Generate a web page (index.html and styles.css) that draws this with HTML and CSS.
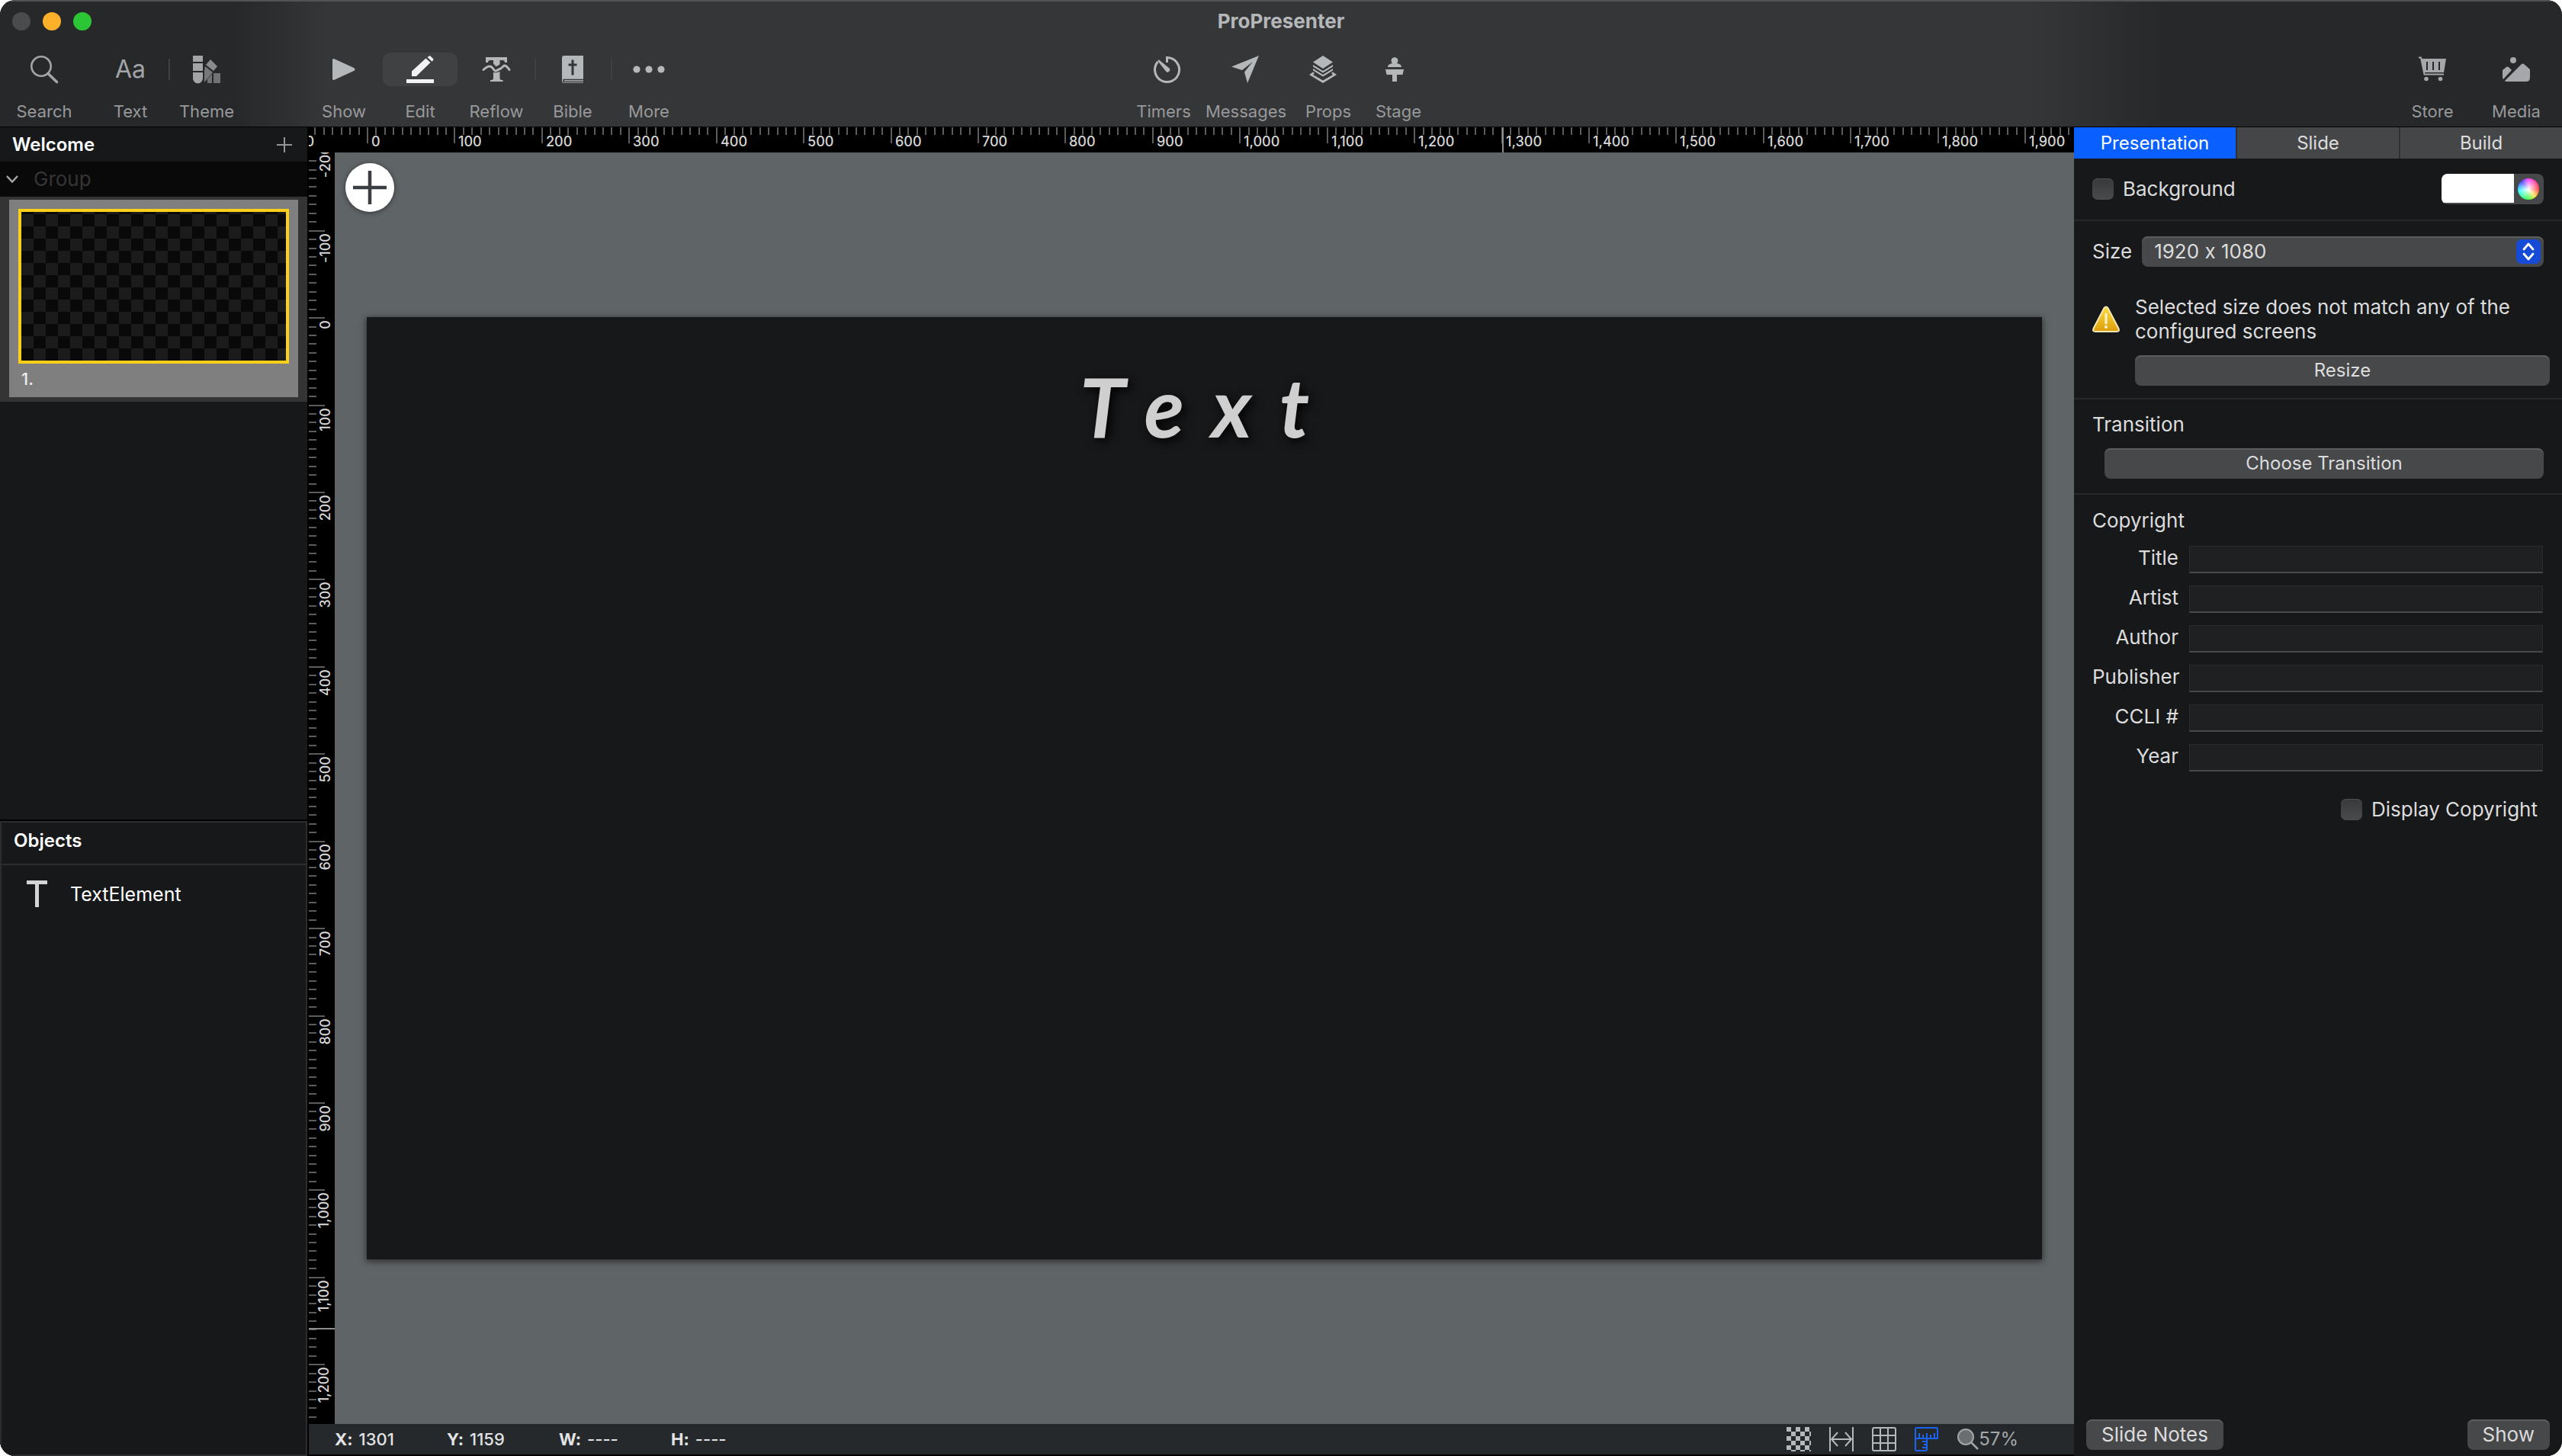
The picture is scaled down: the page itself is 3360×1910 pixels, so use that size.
FILE: index.html
```html
<!DOCTYPE html>
<html lang="en">
<head>
<meta charset="utf-8">
<title>ProPresenter</title>
<meta name="viewport" content="width=device-width, initial-scale=1">
<link rel="stylesheet" href="styles.css">
</head>
<body>
<div class="window">
  <header class="titlebar">
    <div class="title-row">
      <div class="lights">
        <button class="light" aria-label="Close"></button>
        <button class="light light-min" aria-label="Minimize"></button>
        <button class="light light-max" aria-label="Zoom"></button>
      </div>
      <h1 class="title">ProPresenter</h1>
    </div>
    <nav class="toolbar" aria-label="Toolbar">
      <div class="tools tools-left">
        <button class="tool tool-search">
          <span class="tool-icon"><svg width="36" height="36" viewBox="0 0 36 36" fill="none" stroke="currentColor"><circle cx="14" cy="14" r="12.7" stroke-width="2.6"/><path d="M23 23.500L34.500 34.500" stroke-width="3.600" stroke-linecap="round"/></svg></span>
          <span>Search</span>
        </button>
        <button class="tool">
          <span class="tool-icon glyph">Aa</span>
          <span>Text</span>
        </button>
        <button class="tool tool-divided tool-theme">
          <span class="tool-icon"><svg width="36" height="36" viewBox="0 0 36 36" fill="currentColor"><path d="M0 0h13v8H0zM0 10h13v10H0zM0 22h13v8a6 6 0 0 1-13 0z"/><path d="M23 5l9 9-5 6-10-8z" opacity=".8"/><path d="M16 14l10 8-11 13v-15z" opacity=".65"/><path d="M19 31l6-7v12h-6zM27 23h9v13h-9z" opacity=".6"/></svg></span>
          <span>Theme</span>
        </button>
        <button class="tool tool-spaced">
          <span class="tool-icon"><svg width="30" height="30" viewBox="0 0 30 30" fill="currentColor"><path d="M0 3Q0 0 3 1.500L28 13Q31 15 28 17L3 28.500Q0 30 0 27z"/></svg></span>
          <span>Show</span>
        </button>
        <button class="tool tool-active" aria-pressed="true">
          <span class="tool-icon"><svg width="36" height="36" viewBox="0 0 36 36" fill="currentColor"><path d="M7 20.500L25.500 3.500L31.500 9L13 27H7zM27.500 2L30 .5Q31 0 32 1L35 4Q36 5 35 6L33.500 7.800zM0 31h36v5H0z"/></svg></span>
          <span>Edit</span>
        </button>
        <button class="tool">
          <span class="tool-icon"><svg width="36" height="36" viewBox="0 0 36 36"><path d="M4 2h28v7h-3q0-3-3-3h-3.500v24q0 2 4 2v2H10v-2q4 0 4-2V6h-4q-3 0-3 3H4z" fill="currentColor"/><path d="M1 19.500L9 13q3-1 5 2.500t8 0 5-2.500l8 6.500" transform="translate(0 1)" stroke="#353638" stroke-width="8" fill="none"/><path d="M1 18.500Q6 14 9 14t5 3.500 4.500 2 4-2T27 14t8 4.500" stroke="currentColor" stroke-width="3" fill="none" stroke-linecap="round"/></svg></span>
          <span>Reflow</span>
        </button>
        <button class="tool tool-divided">
          <span class="tool-icon"><svg width="28" height="36" viewBox="0 0 28 36"><path d="M3 0h25v36H3q-3 0-3-3V3q0-3 3-3z" fill="currentColor"/><path d="M28 31.500H2v3h26" stroke="#353638" stroke-width="1.500" fill="none"/><path d="M14 5.500v20M8.500 12h11" stroke="#353638" stroke-width="3"/></svg></span>
          <span>Bible</span>
        </button>
        <button class="tool tool-divided">
          <span class="tool-icon"><svg width="44" height="10" viewBox="-1 0 44 10" fill="currentColor"><circle cx="5" cy="5" r="4.600"/><circle cx="21" cy="5" r="4.600"/><circle cx="37" cy="5" r="4.600"/></svg></span>
          <span>More</span>
        </button>
      </div>
      <div class="tools tools-center">
        <button class="tool tool-live">
          <span class="tool-icon"><svg width="36" height="36" viewBox="-5 0 36 36"><path d="M17.500 9V2.500A16 16 0 1 1 5.500 8" fill="none" stroke="currentColor" stroke-width="3"/><path d="M5 6.500L7 5.500 20.500 16.500a3 3 0 0 1-4.500 4z" fill="currentColor"/></svg></span>
          <span>Timers</span>
        </button>
        <button class="tool tool-messages">
          <span class="tool-icon"><svg width="36" height="36" viewBox="1 0 36 36" fill="currentColor"><path d="M36 0L0 14.500 14 19 28 8 17 21.500 21 36z"/></svg></span>
          <span>Messages</span>
        </button>
        <button class="tool tool-live">
          <span class="tool-icon"><svg width="36" height="36" viewBox="7 0 36 36" fill="currentColor"><path d="M18 0l13 8.500L18 17 5 8.500zM5 12l13 8 13-8v2.500l-13 8-13-8zM5 17l13 8 13-8v2.500l-13 8-13-8zM5 21.500L0 25l18 11 18-11-5-3.500-2 1.500 2 2-13 7.500L5 25l2-2z"/></svg></span>
          <span>Props</span>
        </button>
        <button class="tool tool-live">
          <span class="tool-icon"><svg width="36" height="36" viewBox="5 0 36 36" fill="currentColor"><path d="M9 15q0-4 6-5a4.500 4.500 0 1 1 6 0q6 1 6 5zM6 18h24l-1.500 7H21v9h-6v-9H7.500z"/></svg></span>
          <span>Stage</span>
        </button>
      </div>
      <div class="tools tools-right">
        <button class="tool">
          <span class="tool-icon"><svg width="36" height="34" viewBox="0 0 36 34"><path d="M3 3h33l-3 18H7z" fill="currentColor"/><path d="M0 1.500h3l4.500 22H33" fill="none" stroke="currentColor" stroke-width="2"/><path d="M11 7v11M19 7v11M27 7v11" stroke="#27282a" stroke-width="2"/><circle cx="10" cy="29.500" r="2.800" fill="currentColor"/><circle cx="28.500" cy="29.500" r="2.800" fill="currentColor"/></svg></span>
          <span>Store</span>
        </button>
        <button class="tool">
          <span class="tool-icon"><svg width="36" height="36" viewBox="0 -1 36 36" fill="currentColor"><circle cx="14" cy="5" r="4"/><path d="M0 18l5-4q1.500-1 3 0l4 4L1 30q-1-1-1-3zM3 32L25 10q1.500-1 3 0l8 7v11q0 5-5 5H5q-1 0-2-1z"/></svg></span>
          <span>Media</span>
        </button>
      </div>
    </nav>
  </header>

  <main class="workspace">
    <aside class="sidebar">
      <section class="slides">
        <div class="slides-head">
          <h2>Welcome</h2>
          <button class="icon-button" aria-label="Add slide"><svg width="20" height="20" viewBox="0 0 20 20" stroke="currentColor" stroke-width="2"><path d="M10 0v20M0 10h20"/></svg></button>
        </div>
        <button class="group-head">
          <svg width="16" height="10" viewBox="0 0 16 10" fill="none" stroke="#a5a5a5" stroke-width="2.500"><path d="M1 1l7 7.500L15 1"/></svg>
          <span>Group</span>
        </button>
        <div class="group">
          <button class="cell">
            <span class="thumb"></span>
            <span class="cell-label">1.</span>
          </button>
        </div>
      </section>
      <section class="objects">
        <h2>Objects</h2>
        <button class="object">
          <svg width="28" height="36" viewBox="0 0 28 36" fill="#d4d4d6"><path d="M0 0h27v5H16v30h-5V5H0z"/></svg>
          <span>TextElement</span>
        </button>
      </section>
    </aside>

    <section class="editor">
      <svg class="ruler ruler-x" id="ruler-x" aria-hidden="true"></svg>
      <svg class="ruler ruler-y" id="ruler-y" aria-hidden="true"></svg>
      <div class="canvas" id="canvas">
        <div class="slide" id="slide"><p class="slide-text">Text</p></div>
        <button class="add" aria-label="Add object"><svg width="44" height="44" viewBox="0 0 44 44" stroke="#3b3f44" stroke-width="4.500"><path d="M22 0v44M0 22h44"/></svg></button>
      </div>
      <footer class="status">
        <dl class="coords">
          <div><dt>X:</dt><dd>1301</dd></div>
          <div><dt>Y:</dt><dd>1159</dd></div>
          <div><dt>W:</dt><dd>----</dd></div>
          <div><dt>H:</dt><dd>----</dd></div>
        </dl>
        <div class="view-tools">
          <button aria-label="Transparency"><svg width="32" height="32" viewBox="0 0 32 32"><defs><pattern id="chk" width="12" height="12" patternUnits="userSpaceOnUse"><path d="M0 0h6v6H0zM6 6h6v6H6z" fill="#b4b8ba"/></pattern></defs><path d="M0 0h32v32H0z" fill="url(#chk)"/></svg></button>
          <button aria-label="Fit width"><svg width="32" height="32" viewBox="0 0 32 32" fill="none" stroke="currentColor" stroke-width="2"><path d="M1 0v32M31 0v32M4 16h24M11 7l-8 9 8 9M21 7l8 9-8 9"/></svg></button>
          <button aria-label="Grid"><svg width="32" height="32" viewBox="0 0 32 32" fill="none" stroke="currentColor" stroke-width="2"><rect x="1" y="1" width="30" height="30" rx="2"/><path d="M11 1v30M21 1v30M1 11h30M1 21h30"/></svg></button>
          <button class="on" aria-label="Rulers" aria-pressed="true"><svg width="32" height="32" viewBox="0 0 32 32" fill="none" stroke="currentColor" stroke-width="2"><path d="M3 1h25q2 0 2 2v12H16v14q0 2-2 2H3q-2 0-2-2V3q0-2 2-2zM1 15h15M6 8v6M11 10v4M16 8v6M21 10v4M26 8v6M10 19h6M12 23h4M10 27h6"/></svg></button>
          <button class="zoom"><svg width="28" height="28" viewBox="0 0 28 28" fill="none" stroke="currentColor" stroke-width="2"><circle cx="11" cy="11" r="10" fill="#696e71"/><path d="M18 18l9 9" stroke-width="2.500"/></svg><span>57%</span></button>
        </div>
      </footer>
    </section>

    <aside class="inspector">
      <div class="tabs" role="tablist">
        <button class="tab tab-on" role="tab" aria-selected="true">Presentation</button>
        <button class="tab" role="tab" aria-selected="false">Slide</button>
        <button class="tab" role="tab" aria-selected="false">Build</button>
      </div>
      <section class="block row">
        <input class="check" type="checkbox" id="bg">
        <label for="bg">Background</label>
        <div class="well">
          <input type="color" value="#ffffff" aria-label="Background color">
          <button class="wheel" aria-label="Color picker"></button>
        </div>
      </section>
      <section class="block">
        <div class="size-row">
          <label for="size">Size</label>
          <div class="select">
            <select id="size"><option>1920 x 1080</option></select>
            <svg width="32" height="32" viewBox="0 0 32 32" aria-hidden="true"><rect width="32" height="32" rx="7" fill="#164bd8"/><path d="M10 13l6-7 6 7M10 19l6 7 6-7" fill="none" stroke="#fff" stroke-width="2.800" stroke-linecap="round" stroke-linejoin="round"/></svg>
          </div>
        </div>
        <div class="warning">
          <svg width="36" height="36" viewBox="0 0 36 36"><defs><linearGradient id="warn" x2="0" y2="1"><stop stop-color="#fbdc3e"/><stop offset="1" stop-color="#dd9e0c"/></linearGradient></defs><path d="M15.500 3Q18 0 20.500 3L34.500 30Q36 34 32 34H4Q0 34 1.500 30z" fill="url(#warn)" stroke="#f6e7b8" stroke-width="2"/><path d="M18 11v12" stroke="#fff5cf" stroke-width="3" stroke-linecap="round"/><circle cx="18" cy="28" r="2" fill="#fff5cf"/></svg>
          <p>Selected size does not match any of the configured screens</p>
        </div>
        <button class="push resize">Resize</button>
      </section>
      <section class="block transition">
        <h3>Transition</h3>
        <button class="push">Choose Transition</button>
      </section>
      <section class="copyright">
        <h3>Copyright</h3>
        <div class="fields">
          <label for="f-title">Title</label><input id="f-title" type="text">
          <label for="f-artist">Artist</label><input id="f-artist" type="text">
          <label for="f-author">Author</label><input id="f-author" type="text">
          <label for="f-publisher">Publisher</label><input id="f-publisher" type="text">
          <label for="f-ccli">CCLI #</label><input id="f-ccli" type="text">
          <label for="f-year">Year</label><input id="f-year" type="text">
        </div>
        <div class="display row">
          <input class="check" type="checkbox" id="display">
          <label for="display">Display Copyright</label>
        </div>
      </section>
      <div class="actions">
        <button class="push">Slide Notes</button>
        <button class="push">Show</button>
      </div>
    </aside>
  </main>
</div>
<script src="rulers.js"></script>
</body>
</html>
```
FILE: styles.css
```css
* { box-sizing: border-box; margin: 0; padding: 0; }

body {
  background: #fff;
  color: #dcdcdd;
  font: 26px/32px Inter, "Liberation Sans", sans-serif;
  font-feature-settings: "calt" 0;
}

button {
  border: 0;
  background: none;
  color: inherit;
  font: inherit;
}

input, select { font: inherit; font-feature-settings: inherit; color: inherit; }
h1, h2, h3 { font: inherit; }
svg { display: block; flex: none; }

.window {
  display: flex;
  flex-direction: column;
  min-height: 100vh;
  border-radius: 20px;
  overflow: hidden;
  background: #000;
}

/* Title bar and toolbar */
.titlebar {
  height: 167px;
  border-top: 2px solid #525355;
  border-bottom: 1px solid #000;
  background: linear-gradient(90deg, #27282a 310px, #353638 430px, #353638 calc(100% - 700px), #27282a calc(100% - 520px));
}

.title-row {
  display: grid;
  grid-template-columns: 1fr auto 1fr;
  align-items: center;
  height: 52px;
  padding: 0 16px;
}

.lights { display: flex; gap: 16px; }
.light { width: 24px; height: 24px; border-radius: 50%; background: #4a4b4d; }
.light-min { background: #fdb02a; }
.light-max { background: #2cc536; }
.title { color: #b6b7b9; font-weight: 700; }

.toolbar {
  display: grid;
  grid-template-columns: 1fr auto 1fr;
  color: #98999b;
  font-size: 22px;
}

.tools { display: flex; }
.tools-left { padding-left: 8px; }
.tools-right { justify-content: flex-end; padding-right: 5px; }

.tool {
  position: relative;
  display: flex;
  flex-direction: column;
  align-items: center;
  gap: 17px;
  width: 100px;
  padding-top: 15px;
}

.tool-icon {
  display: flex;
  align-items: center;
  justify-content: center;
  width: 98px;
  height: 44px;
  border-radius: 10px;
  color: #b4b8ba;
}

.tool svg { overflow: visible; }
.tool-search { margin-right: 13px; }
.tool-search .tool-icon, .tool-theme .tool-icon, .tool .glyph { color: #a2a4a6; }
.glyph { font-size: 32px; }
.tool-spaced { margin-left: 80px; }
.tool-active .tool-icon { background: #404143; color: #f3f3f7; }

.tool-divided::before {
  content: "";
  position: absolute;
  left: 0;
  top: 23px;
  width: 2px;
  height: 28px;
  background: #3f4042;
}

.tool-live { width: 92px; }
.tool-messages { width: 124px; }
.tools-right .tool { width: 110px; }
.tools-right .tool-icon { color: #a6a7aa; }

.workspace {
  flex: 1;
  display: grid;
  grid-template-columns: 403px minmax(0, 1fr) 640px;
}

/* Slide list and objects */
.sidebar { display: flex; flex-direction: column; background: #17181a; }
.sidebar h2 { color: #fff; font-size: 24px; font-weight: 600; }
.slides { flex: 23; border-bottom: 2px solid #000; }

.slides-head {
  display: flex;
  align-items: center;
  justify-content: space-between;
  height: 45px;
  padding: 0 20px 0 16px;
}

.icon-button { color: #949596; }

.group-head {
  display: flex;
  align-items: center;
  gap: 20px;
  width: 100%;
  height: 46px;
  padding-left: 8px;
  background: #090909;
  color: #353535;
}

.group { padding: 4px 12px 6px; background: #343434; }

.cell {
  display: block;
  width: 100%;
  padding: 12px 12px 8px;
  background: #7f7f7f;
  text-align: left;
}

.thumb {
  display: block;
  height: 203px;
  border: 4px solid #fdd017;
  background: conic-gradient(#090909 25%, #1b1b1b 0 50%, #090909 0 75%, #1b1b1b 0) left bottom / 32px 32px padding-box;
}

.cell-label { display: block; padding: 4px 4px 0; color: #ececec; font-size: 22px; font-weight: 500; }
.objects { flex: 21; border: 2px solid #2b2c2e; }
.objects h2 { padding: 8px 16px 14px; border-bottom: 2px solid #2b2c2e; }

.object {
  display: flex;
  align-items: center;
  gap: 29px;
  padding: 20px 33px;
  color: #fff;
  font-size: 25px;
}

/* Editor: rulers, canvas, status bar */
.editor {
  display: grid;
  grid-template-columns: 34px minmax(0, 1fr);
  grid-template-rows: 33px 1fr 42px;
  padding-left: 2px;
  background: #000;
}

.ruler { width: 100%; height: 100%; overflow: hidden; font-size: 18px; font-weight: 500; fill: #d6d6d6; }
.ruler-x { grid-column: 1 / 3; }
.ruler-y { height: 0; min-height: 100%; }
.tick { fill: #5c5c5c; }
.cursor { fill: #8c8f90; }

.canvas {
  position: relative;
  display: flex;
  align-items: center;
  justify-content: center;
  background: #5f6467;
}

.slide {
  width: calc(100% - 84px);
  aspect-ratio: 16 / 9;
  padding: 56px 0 0 10px;
  background: #17181a;
  box-shadow: 0 2px 8px 1px rgba(0, 0, 0, .5);
}

.slide-text {
  color: #cfcfcf;
  font: italic 700 108px/120px Lato, sans-serif;
  letter-spacing: 36px;
  text-align: center;
  text-shadow: 4px 4px 14px #000;
}

.add {
  position: absolute;
  top: 14px;
  left: 14px;
  display: grid;
  place-items: center;
  width: 64px;
  height: 64px;
  border-radius: 50%;
  background: #fff;
  box-shadow: 0 1px 6px rgba(0, 0, 0, .5);
}

.status {
  grid-column: 1 / 3;
  display: flex;
  align-items: center;
  justify-content: space-between;
  padding: 0 73px 0 34px;
  border-bottom: 2px solid #000;
  background: #26292b;
  color: #e2e3e4;
  font-size: 22px;
}

.coords { display: flex; font-weight: 500; }
.coords div { display: flex; gap: 8px; width: 147px; }
.coords dt { font-weight: 700; }
.view-tools { display: flex; align-items: center; gap: 24px; color: #b4b8ba; }
.view-tools .on { color: #1b64f2; }
.zoom { display: flex; align-items: center; color: #a3a7a9; font-size: 24px; }

/* Inspector */
.inspector { display: flex; flex-direction: column; background: #17181a; }
.tabs { display: grid; grid-template-columns: repeat(3, 1fr); gap: 2px; background: #303133; }
.tab { height: 41px; background: #454648; font-size: 24px; }
.tab-on { background: #0a60ff; color: #fff; }
.block { padding: 20px 24px 16px; border-bottom: 2px solid #27282a; }
.row { display: flex; align-items: center; gap: 12px; }
.block.row { padding-bottom: 20px; }

.check {
  appearance: none;
  width: 28px;
  height: 28px;
  border-radius: 7px;
  background: linear-gradient(#38393b, #4a4b4d);
  box-shadow: inset 0 1px #505153;
}

.well {
  display: flex;
  align-items: center;
  gap: 5px;
  height: 40px;
  margin-left: auto;
  padding-right: 6px;
  border-radius: 8px;
  background: #47484a;
  overflow: hidden;
}

.well input {
  appearance: none;
  width: 95px;
  height: 38px;
  border: 0;
  align-self: flex-start;
  background: #fff;
}

.well input::-webkit-color-swatch-wrapper { padding: 0; }
.well input::-webkit-color-swatch { border: 0; }

.wheel {
  width: 28px;
  height: 28px;
  border-radius: 50%;
  background:
    radial-gradient(#fff, transparent 70%),
    conic-gradient(#f4f, #f44 25%, #fd4 38%, #4f4 50%, #3ff 72%, #44f 88%, #f4f);
}

.size-row { display: flex; align-items: center; gap: 13px; }
.select { flex: 1; display: grid; align-items: center; }
.select > * { grid-area: 1 / 1; }
.select svg { justify-self: end; margin-right: 4px; pointer-events: none; }

.select select {
  appearance: none;
  width: 100%;
  height: 40px;
  padding: 0 16px;
  border: 0;
  border-radius: 8px;
  background: #47484a;
  box-shadow: inset 0 2px #5c5d5f;
}

.warning { display: flex; align-items: center; gap: 20px; margin: 37px 0 15px; }
.warning p { flex: 1; }

.push {
  height: 40px;
  padding: 0 20px;
  border-radius: 8px;
  background: #47484a;
  box-shadow: inset 0 2px #5c5d5f;
  font-size: 24px;
}

.resize { display: block; width: calc(100% - 48px); margin-left: 56px; }
.transition { padding: 17px 24px 19px; }
.transition .push { display: block; width: calc(100% - 16px); margin: 15px 0 0 16px; }
.copyright { padding: 18px 25px 0 24px; }

.fields {
  display: grid;
  grid-template-columns: 113px 1fr;
  gap: 16px 14px;
  margin-top: 17px;
}

.fields label { text-align: right; }

.fields input {
  width: 100%;
  height: 36px;
  padding: 0 8px;
  border: 1px solid #2a2b2d;
  border-bottom: 2px solid #48494b;
  background: #1f2022;
}

.display { justify-content: flex-end; margin: 34px 7px 0 0; }
.actions { display: flex; justify-content: space-between; margin-top: auto; padding: 0 16px 8px; }
.actions .push { font-size: 26px; }
```
FILE: rulers.js
```js
// Draws both rulers in slide units, following the size of the slide on screen.
const UNITS = 1920;
const NS = "http://www.w3.org/2000/svg";
const slide = document.getElementById("slide");
const cursor = { x: 1301, y: 1159 };

function add(parent, name, attrs, text) {
  const node = document.createElementNS(NS, name);
  for (const key in attrs) node.setAttribute(key, attrs[key]);
  if (text) node.textContent = text;
  parent.appendChild(node);
}

function draw(id, vertical) {
  const ruler = document.getElementById(id);
  ruler.replaceChildren();
  const box = ruler.getBoundingClientRect();
  const area = slide.getBoundingClientRect();
  const scale = area.width / UNITS;
  const origin = vertical ? area.top - box.top : area.left - box.left;
  const length = vertical ? box.height : box.width;

  function tick(pos, size, kind) {
    add(ruler, "rect", vertical
      ? { x: 0, y: pos, width: size, height: 2, class: kind }
      : { x: pos, y: 0, width: 2, height: size, class: kind });
  }

  for (let unit = -200; unit * scale + origin < length; unit += 10) {
    const pos = Math.round(unit * scale + origin);
    const major = unit % 100 === 0;
    if (pos >= 0) tick(pos, major ? 21 : 10, "tick");
    if (!major || pos < -40) continue;
    const label = unit.toLocaleString("en-US");
    if (vertical) {
      const base = label.includes(",") ? 26 : 28;
      add(ruler, "text", { transform: `translate(${base} ${pos + 4}) rotate(-90)`, "text-anchor": "end" }, label);
    } else {
      add(ruler, "text", { x: pos + 6, y: 25 }, label);
    }
  }
  tick(Math.round((vertical ? cursor.y : cursor.x) * scale + origin), 34, "cursor");
}

function drawRulers() {
  draw("ruler-x", false);
  draw("ruler-y", true);
}

drawRulers();
addEventListener("resize", drawRulers);
```
